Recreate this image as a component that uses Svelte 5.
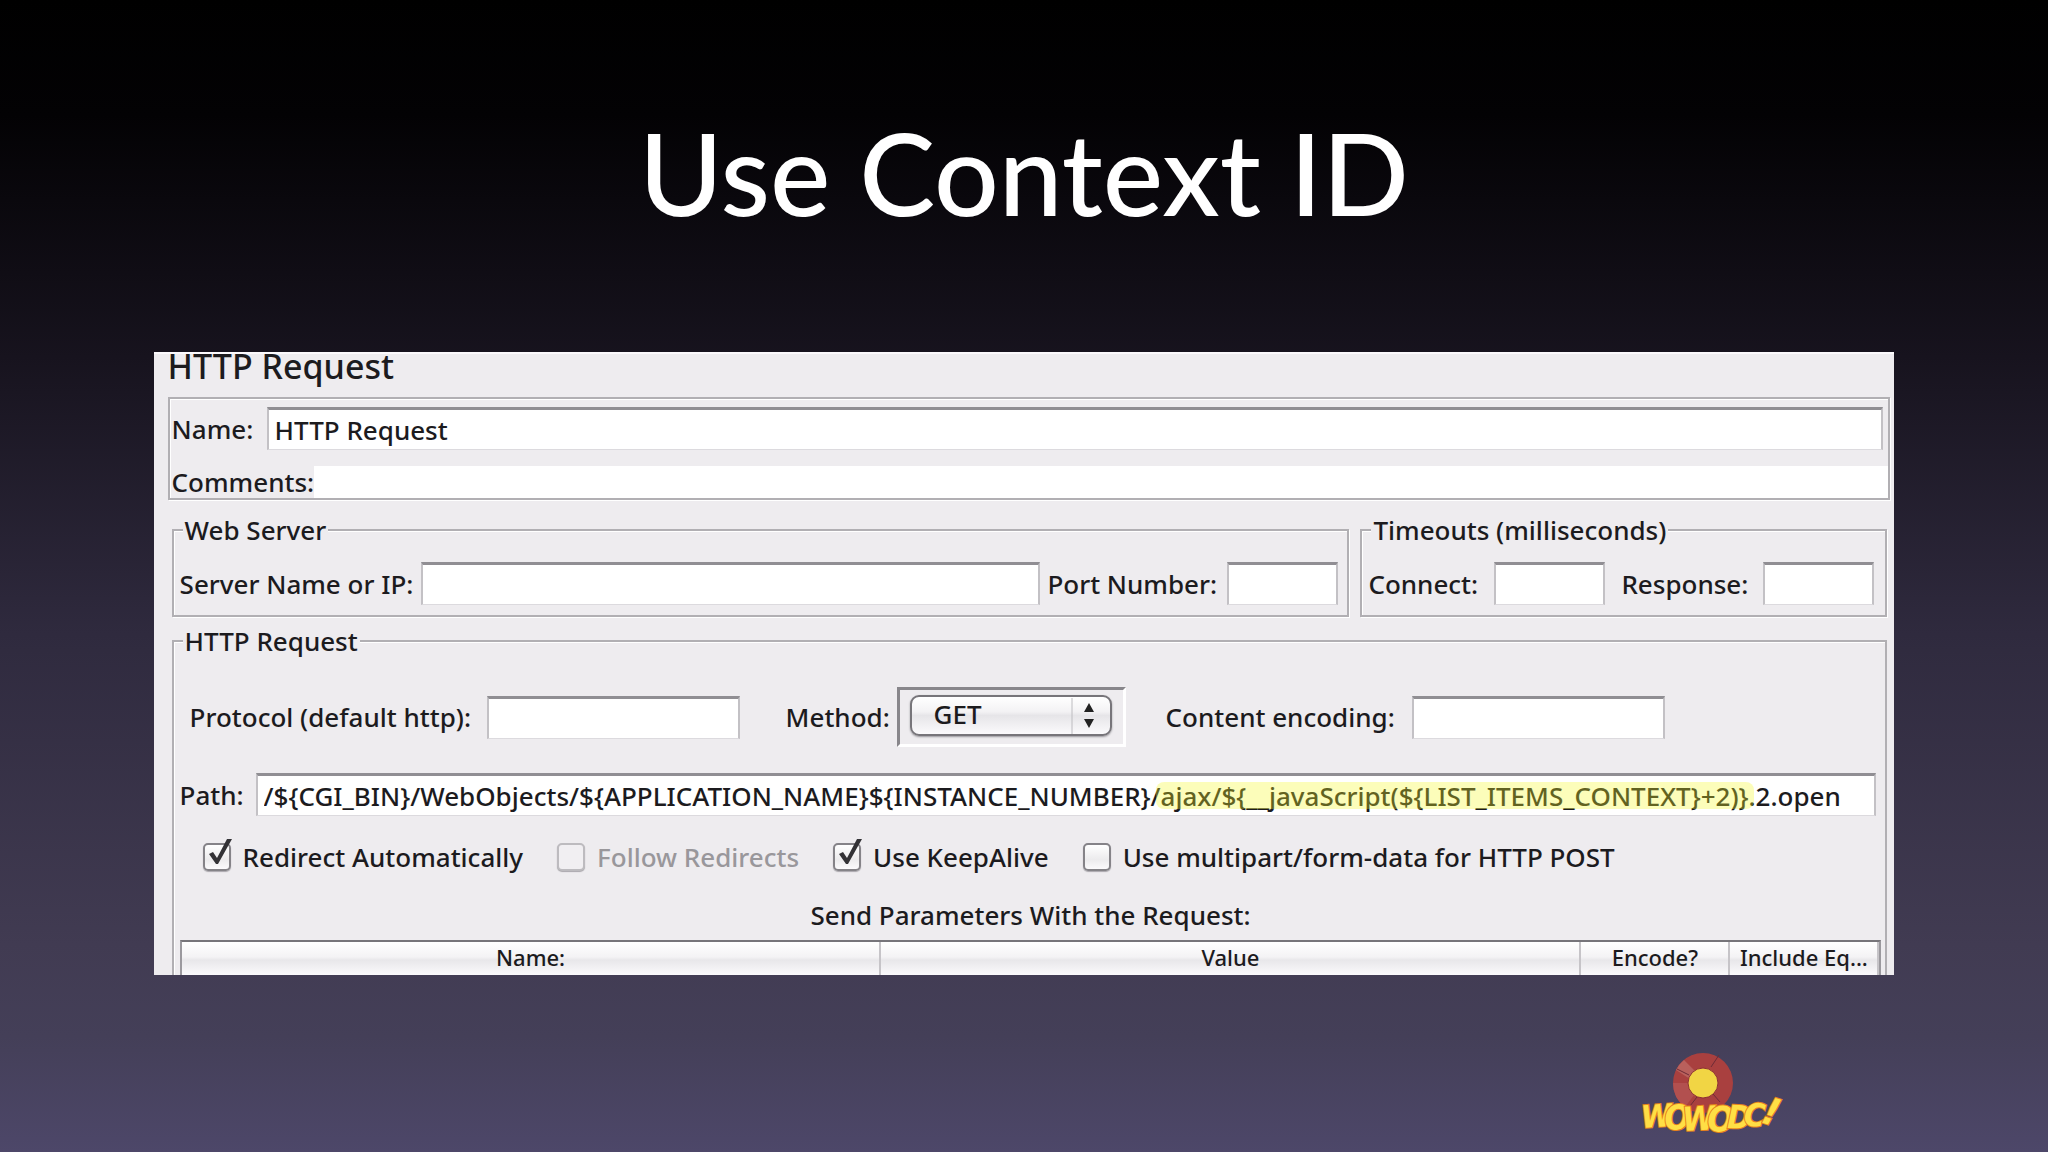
<script lang="ts">
  type Option = {
    id: string;
    label: string;
    checked: boolean;
    disabled?: boolean;
  };

  let name = $state('HTTP Request');
  let method = $state('GET');
  let path = $state(
    '/${CGI_BIN}/WebObjects/${APPLICATION_NAME}${INSTANCE_NUMBER}/ajax/${__javaScript(${LIST_ITEMS_CONTEXT}+2)}.2.open'
  );

  let options: Option[] = $state([
    { id: 'redirect', label: 'Redirect Automatically', checked: true },
    { id: 'follow', label: 'Follow Redirects', checked: false, disabled: true },
    { id: 'keepalive', label: 'Use KeepAlive', checked: true },
    { id: 'multipart', label: 'Use multipart/form-data for HTTP POST', checked: false }
  ]);

  const letters = [
    { char: 'W', x: 22, y: 88, turn: -4, size: 31 },
    { char: 'O', x: 45, y: 90, turn: -3, size: 34 },
    { char: 'W', x: 63, y: 91, turn: -3, size: 33 },
    { char: 'O', x: 87, y: 91, turn: 2, size: 35 },
    { char: 'D', x: 107, y: 88, turn: 2, size: 32 },
    { char: 'C', x: 123, y: 85, turn: 6, size: 32 },
    { char: '!', x: 140, y: 82, turn: 18, size: 38 }
  ];
</script>

<main class="slide">
  <h1>Use Context ID</h1>

  <form class="panel">
    <h2>HTTP Request</h2>

    <div class="identity">
      <div class="row name-row">
        <label for="name">Name:</label>
        <input id="name" class="field" type="text" bind:value={name} />
      </div>
      <div class="row comments-row">
        <label for="comments">Comments:</label>
        <input id="comments" class="plain" type="text" />
      </div>
    </div>

    <div class="groups">
      <fieldset>
        <legend>Web Server</legend>
        <div class="row server-row">
          <label for="server">Server Name or IP:</label>
          <input id="server" class="field" type="text" />
          <label class="port" for="port">Port Number:</label>
          <input id="port" class="field" type="text" />
        </div>
      </fieldset>
      <fieldset>
        <legend>Timeouts (milliseconds)</legend>
        <div class="row timeout-row">
          <label for="connect">Connect:</label>
          <input id="connect" class="field" type="text" />
          <label class="response" for="response">Response:</label>
          <input id="response" class="field" type="text" />
        </div>
      </fieldset>
    </div>

    <fieldset class="request">
      <legend>HTTP Request</legend>

      <div class="row protocol-row">
        <label for="protocol">Protocol (default http):</label>
        <input id="protocol" class="field" type="text" />
        <label class="method" for="method">Method:</label>
        <div class="well">
          <div class="popup">
            <select id="method" bind:value={method}>
              <option>GET</option>
              <option>POST</option>
            </select>
            <svg class="arrows" viewBox="0 0 40 38" aria-hidden="true">
              <path d="M1 1V37" stroke="#bdbcc0" />
              <path d="M18 6l5 9H13zM18 31l5-9H13z" fill="#222" />
            </svg>
          </div>
        </div>
        <label class="encoding" for="encoding">Content encoding:</label>
        <input id="encoding" class="field" type="text" />
      </div>

      <div class="row path-row">
        <label for="path">Path:</label>
        <div class="path-box">
          <input id="path" class="field" type="text" bind:value={path} />
          <span class="marker"></span>
        </div>
      </div>

      <div class="options">
        {#each options as option (option.id)}
          <label class="option" class:disabled={option.disabled}>
            <span class="tick">
              <input type="checkbox" bind:checked={option.checked} disabled={option.disabled} />
              {#if option.checked}
                <svg viewBox="0 0 32 34" aria-hidden="true">
                  <path d="M6 17l4-2 4 6L24 2h5L15 27h-2z" fill="#333236" />
                </svg>
              {/if}
            </span>
            {option.label}
          </label>
        {/each}
      </div>

      <p>Send Parameters With the Request:</p>

      <table>
        <thead>
          <tr>
            <th scope="col">Name:</th>
            <th scope="col">Value</th>
            <th scope="col" class="encode">Encode?</th>
            <th scope="col" class="include">Include Eq...</th>
          </tr>
        </thead>
      </table>
    </fieldset>
  </form>

  <footer>
    <svg class="logo" viewBox="0 0 180 112" role="img" aria-label="WOWODC!">
      <circle cx="83" cy="43" r="30" fill="#a9403f" />
      <path d="M56 30A30 30 0 0 1 64 20l12 12a14 14 0 0 0-6 7z" fill="#b9605c" />
      <path d="M53 43a30 30 0 0 0 12 24l9-12a14 14 0 0 1-5-12z" fill="#b2504f" />
      <path
        d="M91 27l8-12M57 29l12 6M70 66l7-9M93 54l7 8"
        fill="none"
        stroke="#6d2b36"
        stroke-width="1"
      />
      <circle cx="83" cy="43" r="15" fill="#f1d544" stroke="#8c3034" />
      {#each letters as letter}
        <text
          x={letter.x}
          y={letter.y}
          font-size={letter.size}
          transform={`rotate(${letter.turn} ${letter.x} ${letter.y})`}>{letter.char}</text
        >
      {/each}
    </svg>
  </footer>
</main>

<style>
  :global(body) {
    margin: 0;
    background: #4c4666;
  }

  .slide {
    box-sizing: border-box;
    display: flex;
    flex-direction: column;
    align-items: center;
    min-height: 100vh;
    padding-top: 92px;
    background: linear-gradient(
      #000 0%,
      #030204 10%,
      #17131e 31%,
      #2f2a3e 55%,
      #413b52 82%,
      #443f58 90%,
      #4d4769 100%
    );
    color: #1c1b1e;
    font-family: 'Noto Sans', sans-serif;
    font-size: 26px;
    font-weight: 500;
    line-height: 30px;
  }

  h1 {
    margin: 0 0 100px;
    color: #fff;
    font-family: 'Gill Sans', Lato, sans-serif;
    font-size: 114px;
    font-weight: 500;
    line-height: 160px;
  }

  .panel {
    box-sizing: border-box;
    width: 85%;
    padding: 0 4px 0 14px;
    background: #eeecef;
    box-shadow: inset 0 2px #fbf9fc;
  }

  h2 {
    margin: 0 0 17px;
    font-size: 34px;
    font-weight: 500;
    line-height: 28px;
  }

  .identity {
    display: grid;
    gap: 16px;
    padding: 8px 0 0 2px;
    border: 2px solid #b1afb3;
    box-shadow:
      1px 1px #fff,
      inset 1px 1px #fff;
  }

  .row {
    display: grid;
    align-items: center;
    white-space: nowrap;
  }

  .name-row {
    grid-template-columns: 95px 1fr;
    padding-right: 5px;
  }

  .comments-row {
    grid-template-columns: 142px 1fr;
  }

  input,
  select {
    box-sizing: border-box;
    width: 100%;
    min-width: 0;
    margin: 0;
    color: inherit;
    font: inherit;
  }

  .field {
    height: 43px;
    padding: 0 6px;
    border: 2px solid #c3c1c5;
    border-top: 3px solid #908e93;
    border-bottom: 1px solid #dcdade;
    background: #fff;
  }

  .plain {
    height: 32px;
    padding: 0 4px;
    border: 0;
    background: #fff;
  }

  .groups {
    display: grid;
    grid-template-columns: 1fr 527px;
    gap: 11px;
    margin: 15px 3px 9px 4px;
  }

  fieldset {
    min-width: 0;
    margin: 0;
    padding: 17px 9px 10px 6px;
    border: 2px solid #b1afb3;
    box-shadow:
      1px 1px #fff,
      inset 1px 1px #fff;
  }

  legend {
    margin-left: 3px;
    padding: 0 2px;
    background: #eeecef;
  }

  .server-row {
    grid-template-columns: 241px 1fr 187px 111px;
  }

  .port {
    padding-left: 7px;
  }

  .timeout-row {
    grid-template-columns: 126px 111px 158px 111px;
  }

  .response {
    padding-left: 16px;
  }

  .request {
    margin: 0 3px 0 4px;
    padding: 31px 4px 0 6px;
    border-bottom: 0;
    box-shadow: inset 1px 1px #fff;
  }

  .protocol-row {
    grid-template-columns: 297px 253px 157px 229px 286px 253px;
    padding-left: 10px;
  }

  .method {
    padding-left: 46px;
  }

  .encoding {
    padding-left: 40px;
  }

  .well {
    padding: 5px 11px 8px 10px;
    border: 3px solid #fff;
    border-top-color: #88868b;
    border-left-color: #88868b;
  }

  .popup {
    position: relative;
  }

  select {
    display: block;
    height: 41px;
    padding: 0 44px 3px 22px;
    border: 2px solid #77757a;
    border-radius: 9px;
    appearance: none;
    background: linear-gradient(#fff, #f3f2f4 40%, #e6e5e8 50%, #fbfafc);
    box-shadow: 0 1px 2px #99979c;
  }

  .arrows {
    position: absolute;
    top: 2px;
    right: 1px;
    width: 40px;
    height: 38px;
    pointer-events: none;
  }

  .path-row {
    grid-template-columns: 76px 1fr;
    margin: 26px 5px 26px 0;
  }

  .path-box {
    position: relative;
    display: grid;
  }

  .marker {
    position: absolute;
    top: 9px;
    right: 122px;
    left: 900px;
    height: 27px;
    border-radius: 8px;
    background: rgba(245, 250, 40, 0.32);
    pointer-events: none;
  }

  .options {
    display: flex;
    gap: 34px;
    padding-left: 23px;
    white-space: nowrap;
  }

  .option {
    display: flex;
    align-items: center;
    gap: 12px;
  }

  .disabled {
    color: #99979b;
  }

  .tick {
    position: relative;
    display: grid;
  }

  .tick input {
    width: 28px;
    height: 28px;
    border: 2px solid #858388;
    border-radius: 5px;
    appearance: none;
    background: linear-gradient(#fff, #ecebed 60%, #fbfafc);
    box-shadow: 0 1px 1px #a9a7ac;
  }

  .tick input:disabled {
    border-color: #bdbbbf;
    background: #f1eff2;
  }

  .tick svg {
    position: absolute;
    top: -6px;
    left: 0;
    width: 32px;
    height: 34px;
    pointer-events: none;
  }

  p {
    margin: 28px 0 10px;
    text-align: center;
  }

  table {
    width: 100%;
    border: 2px solid #77757a;
    border-bottom: 0;
    border-left-color: #9b999e;
    border-right-color: #9b999e;
    border-spacing: 0;
    table-layout: fixed;
    background: linear-gradient(#fff, #f4f3f5 45%, #e8e7ea 55%, #fbfafc);
  }

  th {
    height: 33px;
    padding: 0;
    border-right: 2px solid #c6c4c8;
    font-size: 22px;
    font-weight: 500;
    line-height: 30px;
    vertical-align: top;
    white-space: nowrap;
  }

  .encode,
  .include {
    width: 147px;
  }

  footer {
    display: flex;
    justify-content: flex-end;
    width: 100%;
    margin-top: auto;
  }

  .logo {
    width: 180px;
    height: 112px;
    margin-right: 248px;
  }

  .logo text {
    fill: #ffdf45;
    stroke: #e5821c;
    stroke-width: 2px;
    paint-order: stroke;
    font-family: 'Liberation Sans Narrow', 'DejaVu Sans Condensed', sans-serif;
    font-style: italic;
    font-weight: 700;
  }
</style>
